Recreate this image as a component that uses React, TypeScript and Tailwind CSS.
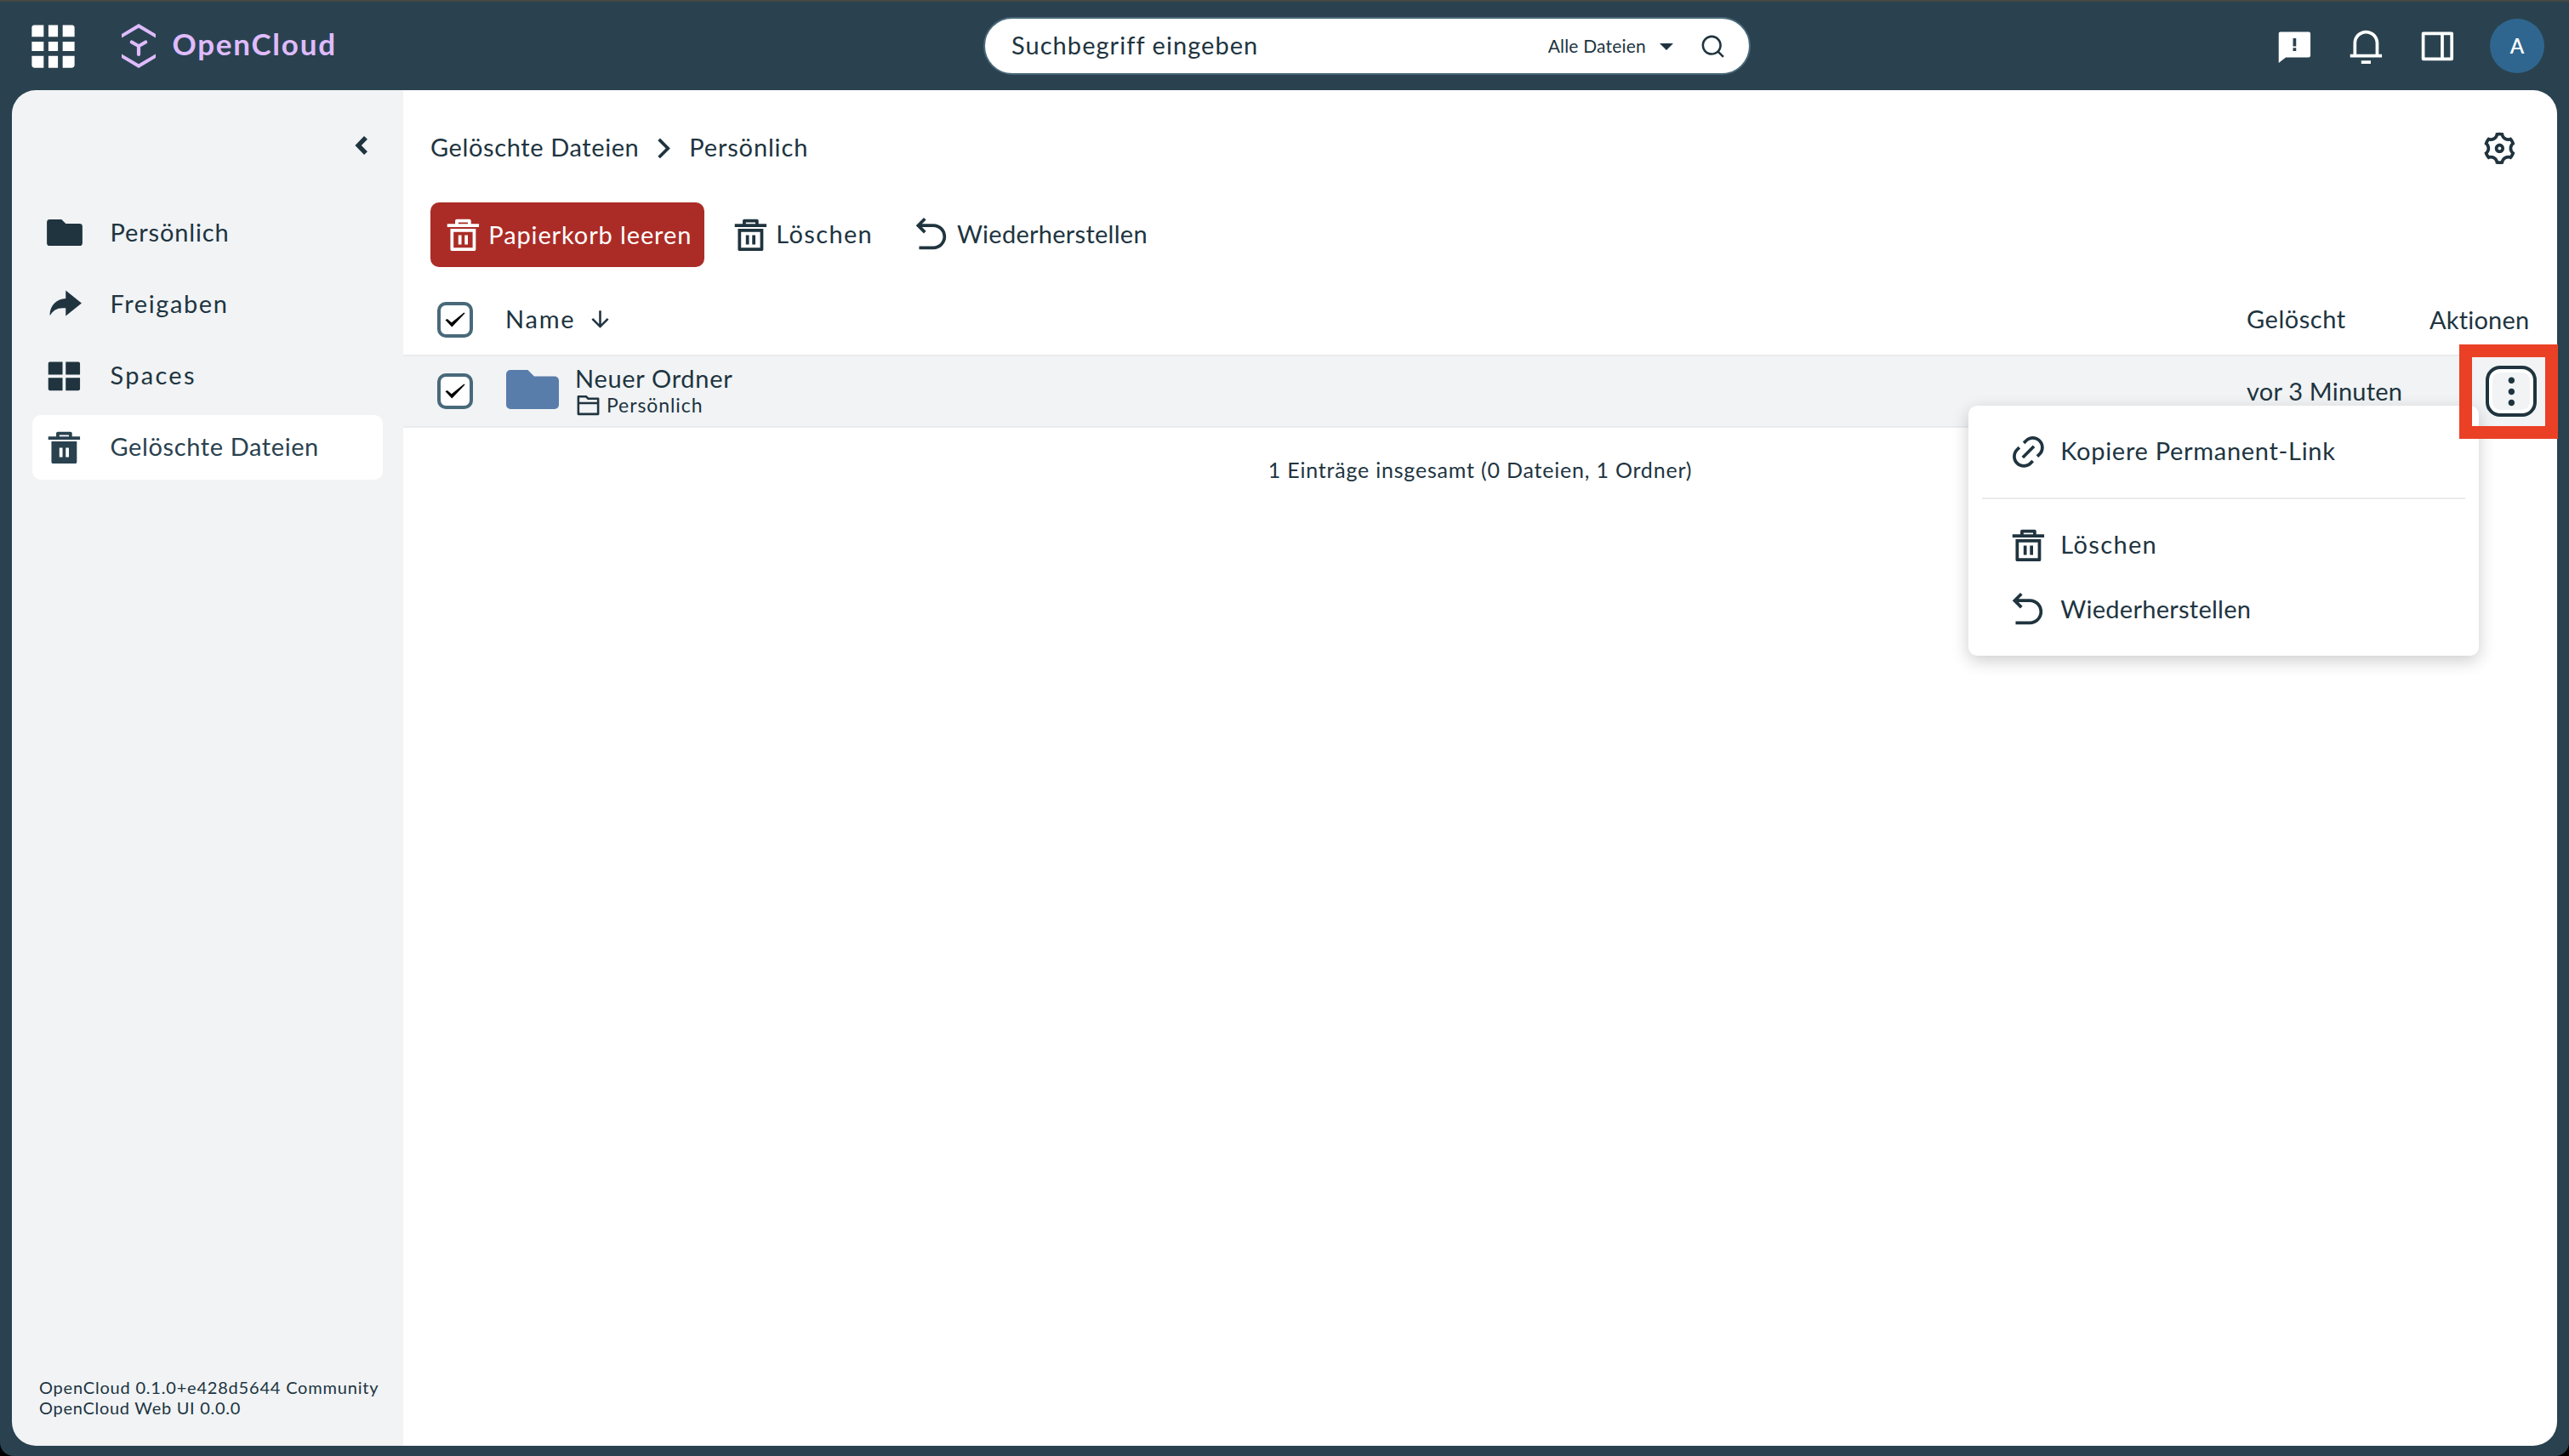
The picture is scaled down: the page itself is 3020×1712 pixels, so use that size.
import { useState } from "react";
import clsx from "clsx";
import {
  RiArrowDownLine,
  RiArrowGoBackLine,
  RiArrowRightSLine,
  RiDeleteBin5Fill,
  RiDeleteBin5Line,
  RiFeedbackFill,
  RiFolder2Line,
  RiGridFill,
  RiLayoutGridFill,
  RiLink,
  RiMore2Fill,
  RiNotification3Line,
  RiSearchLine,
  RiSettings3Line,
  RiSideBarLine,
} from "react-icons/ri";

const ICON = "size-[44.8px] shrink-0";

function FolderIcon({ className }: { className?: string }) {
  return (
    <svg viewBox="0 0 62 46" fill="currentColor" className={className}>
      <path d="M5 0H25.5L33 7.5H57A5 5 0 0 1 62 12.500V41A5 5 0 0 1 57 46H5A5 5 0 0 1 0 41V5A5 5 0 0 1 5 0Z" />
    </svg>
  );
}

function ShareIcon({ className }: { className?: string }) {
  return (
    <svg viewBox="0 0 24 24" fill="currentColor" className={className}>
      <path d="M13 14h-2a8.999 8.999 0 0 0-7.968 4.81A10.136 10.136 0 0 1 3 18C3 12.477 7.477 8 13 8V3l10 8-10 8v-5z" />
    </svg>
  );
}

const NAV = [
  { id: "personal", label: "Persönlich", icon: <FolderIcon className="-mt-[2px] h-[31px] w-[42px]" />, tracking: "tracking-[0.85px]" },
  { id: "shares", label: "Freigaben", icon: <ShareIcon className={ICON} />, tracking: "tracking-[1.6px]" },
  { id: "spaces", label: "Spaces", icon: <RiLayoutGridFill className={ICON} />, tracking: "tracking-[2.3px]" },
  { id: "trash", label: "Gelöschte Dateien", icon: <RiDeleteBin5Fill className={ICON} />, tracking: "tracking-[0.61px]" },
];

function Logo() {
  return (
    <div className="ml-[47px] flex items-center text-[#dfbbfd]">
      <svg viewBox="0 0 40 52" className="h-[52px] w-[40px]" fill="none">
        <path d="M0 12L20 0L40 12V16.500L20 4.800L0 16.500Z" fill="currentColor" />
        <path d="M0 40L20 52L40 40V35.500L20 47.200L0 35.500Z" fill="currentColor" />
        <path d="M11.800 21.500L20 26.200L28.200 21.500M20 26.200V36" stroke="currentColor" strokeWidth="4.200" strokeLinecap="round" />
      </svg>
      <span className="ml-[20px] pb-[6px] text-[35px] leading-[42px] font-bold tracking-[1.75px]">OpenCloud</span>
    </div>
  );
}

function TopBar() {
  return (
    <header className="flex h-[106px] items-center border-t-2 border-[#454845] text-white">
      <div className="flex w-[1156px] items-center pl-[28.5px]">
        <RiGridFill className="size-[67px]" />
        <Logo />
      </div>

      <div className="flex h-[68px] w-[902px] items-center rounded-full border-2 border-[#48697a] bg-white text-[#20343f]">
        <span className="ml-[31px] pb-[2px] text-[29px] tracking-[1.05px]">Suchbegriff eingeben</span>
        <span className="ml-auto pb-px text-[21px] tracking-[0.2px]">Alle Dateien</span>
        <svg viewBox="0 0 16 8" className="mt-[2px] ml-[16px] h-[8px] w-[16px]" fill="currentColor">
          <path d="M0 0H16L8 8Z" />
        </svg>
        <RiSearchLine className="mr-[27px] ml-[31px] size-[31px]" />
      </div>

      <div className="ml-auto flex items-center gap-[39.2px] pr-[29px]">
        <RiFeedbackFill className={ICON} />
        <RiNotification3Line className={ICON} />
        <RiSideBarLine className="size-[44.8px] -scale-x-100" />
        <div className="flex size-[64px] items-center justify-center rounded-full bg-[#2f668f] text-[24px] font-semibold">A</div>
      </div>
    </header>
  );
}

function Sidebar({ active }: { active: string }) {
  return (
    <aside className="flex w-[460px] shrink-0 flex-col bg-[#f1f3f5] px-[24px]">
      <div className="mt-[53px] flex justify-end pr-[17px]">
        <svg viewBox="0 0 16 24" className="h-[24px] w-[16px]" fill="none">
          <path d="M13 2.800L4.200 12L13 21.200" stroke="currentColor" strokeWidth="5.400" />
        </svg>
      </div>

      <nav className="mt-[53px] flex flex-col gap-[8px]">
        {NAV.map((item) => (
          <a
            key={item.id}
            className={clsx("flex h-[76px] items-center rounded-[10px] pl-[14.5px]", item.id === active && "bg-white text-[#2a424f]")}
          >
            <span className="flex w-[46px] shrink-0 justify-center">{item.icon}</span>
            <span className="w-[31px] shrink-0" />
            <span className={clsx("pb-[2px]", item.tracking)}>{item.label}</span>
          </a>
        ))}
      </nav>

      <div className="mt-auto mb-[33px] ml-[8px] text-[20px] leading-[24px] whitespace-nowrap">
        <p className="tracking-[0.8px]">OpenCloud 0.1.0+e428d5644 Community</p>
        <p className="tracking-[0.72px]">OpenCloud Web UI 0.0.0</p>
      </div>
    </aside>
  );
}

function Checkbox({ checked, onChange }: { checked: boolean; onChange: () => void }) {
  return (
    <button onClick={onChange} className="flex size-[42px] items-center justify-center rounded-[10px] border-4 border-[#48697a] bg-white">
      {checked && (
        <svg viewBox="0 0 24 18" className="h-[18px] w-[24px]" fill="black">
          <path d="M0.500 9.200L2.800 8L7.800 12.200L22.500 0.500L23.600 1.300L8.300 17.500Z" />
        </svg>
      )}
    </button>
  );
}

function ContextMenu() {
  return (
    <div className="absolute top-[477px] left-[2314px] w-[600px] rounded-[10px] bg-white py-[16px] shadow-[0_6px_20px_rgba(0,0,0,0.2)]">
      <div className="flex h-[76px] items-center pl-[47.5px]">
        <RiLink className={ICON} />
        <span className="ml-[16px] pb-[2px] tracking-[0.7px]">Kopiere Permanent-Link</span>
      </div>
      <div className="mx-[16px] my-[16px] h-[2px] bg-[#ebebeb]" />
      <div className="flex h-[76px] items-center pl-[47.5px]">
        <RiDeleteBin5Line className={ICON} />
        <span className="ml-[16px] pb-[2px] tracking-[1.35px]">Löschen</span>
      </div>
      <div className="flex h-[76px] items-center pl-[47.5px]">
        <RiArrowGoBackLine className={ICON} />
        <span className="ml-[16px] pb-[2px] tracking-[0.27px]">Wiederherstellen</span>
      </div>
    </div>
  );
}

function Files() {
  const [selected, setSelected] = useState(true);
  const toggle = () => setSelected(!selected);

  return (
    <main className="flex min-w-0 flex-1 flex-col bg-white">
      {/* Breadcrumb */}
      <div className="mt-[45px] flex h-[46px] items-center pr-[45.5px] pl-[32px]">
        <span className="pb-[2px] tracking-[0.61px]">Gelöschte Dateien</span>
        <RiArrowRightSLine className="ml-[7px] size-[44.8px]" />
        <span className="ml-[7px] pb-[2px] tracking-[0.85px]">Persönlich</span>
        <RiSettings3Line className="ml-auto size-[44.8px]" />
      </div>

      {/* Batch actions */}
      <div className="mt-[41px] flex h-[76px] items-center pl-[32px]">
        <button className="flex h-[76px] w-[322px] items-center rounded-[10px] bg-[#ab2c26] pl-[15.5px] text-white">
          <RiDeleteBin5Line className={ICON} />
          <span className="ml-[8px] pb-px tracking-[0.88px]">Papierkorb leeren</span>
        </button>
        <button className="ml-[31.5px] flex items-center">
          <RiDeleteBin5Line className={ICON} />
          <span className="ml-[8px] pb-px tracking-[1.35px]">Löschen</span>
        </button>
        <button className="ml-[47px] flex items-center">
          <RiArrowGoBackLine className={ICON} />
          <span className="ml-[7px] pb-px tracking-[0.27px]">Wiederherstellen</span>
        </button>
      </div>

      {/* Table head */}
      <div className="mt-[20px] flex h-[83px] items-center pl-[40px]">
        <Checkbox checked={selected} onChange={toggle} />
        <span className="ml-[38px] pb-px tracking-[1.8px]">Name</span>
        <RiArrowDownLine className="ml-[14px] size-[31px]" />
        <span className="ml-auto w-[215px] pb-px tracking-[0.53px]">Gelöscht</span>
        <span className="w-[150px] pt-px tracking-[0.19px]">Aktionen</span>
      </div>

      {/* Row */}
      <div className={clsx("flex h-[86px] items-center border-y-2 border-[#e9ebed] pl-[40px]", selected && "bg-[#f1f3f5]")}>
        <Checkbox checked={selected} onChange={toggle} />
        <FolderIcon className="-mt-[5px] ml-[39px] h-[46px] w-[62px] text-[#597dab]" />
        <div className="-mt-[4px] ml-[19px] flex flex-col">
          <span className="leading-[35px] tracking-[0.7px]">Neuer Ordner</span>
          <div className="flex h-[28px] items-center">
            <RiFolder2Line className="mt-[2px] size-[31px]" />
            <span className="ml-[6px] text-[23px] leading-[28px] tracking-[0.92px]">Persönlich</span>
          </div>
        </div>
        <span className="ml-auto w-[281px] pb-px tracking-[0.2px]">vor 3 Minuten</span>
        <div className="flex w-[84px]">
          <button className="flex size-[60px] items-center justify-center rounded-[17px] border-4 border-[#20343f] bg-[#f1f3f5] shadow-[inset_0_0_0_4px_white]">
            <RiMore2Fill className="size-[44.8px]" />
          </button>
        </div>
      </div>

      <p className="mt-[32px] text-center text-[25px] leading-[34px] tracking-[0.8px]">
        1 Einträge insgesamt (0 Dateien, 1 Ordner)
      </p>
    </main>
  );
}

export default function App() {
  return (
    <div className="h-[1712px] w-[3020px] bg-black">
      <div className="relative flex h-full flex-col overflow-hidden rounded-b-[16px] bg-[#2a424f] pb-[12px] font-['Lato',sans-serif] text-[29px] leading-[36px] text-[#20343f]">
        <TopBar />
        <div className="mx-[14px] flex flex-1 overflow-hidden rounded-[28px]">
          <Sidebar active="trash" />
          <Files />
        </div>
        <ContextMenu />
        {/* Highlight around the row's action button */}
        <div className="pointer-events-none absolute top-[405px] left-[2891px] h-[111px] w-[116px] border-[15px] border-[#ea4025]" />
      </div>
    </div>
  );
}
